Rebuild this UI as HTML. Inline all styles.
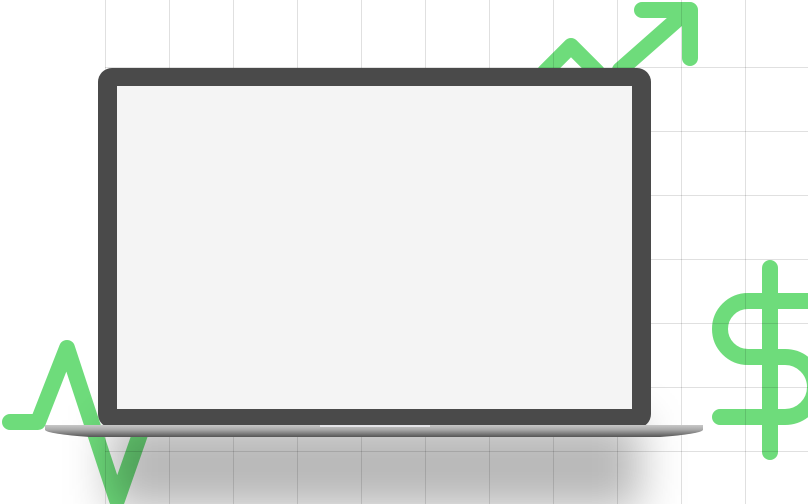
<!DOCTYPE html>
<html><head><meta charset="utf-8"><style>
html,body{margin:0;padding:0;width:808px;height:504px;overflow:hidden;background:#fff}
svg{display:block}
</style></head><body>
<svg width="808" height="504" viewBox="0 0 808 504" xmlns="http://www.w3.org/2000/svg">
<defs>
<filter id="bl" x="-20%" y="-50%" width="140%" height="200%"><feGaussianBlur stdDeviation="22"/></filter>
<linearGradient id="base" x1="0" y1="0" x2="0" y2="1">
<stop offset="0" stop-color="#c8c8c8"/>
<stop offset="0.4" stop-color="#a8a8a8"/>
<stop offset="1" stop-color="#555"/>
</linearGradient>
</defs>
<g stroke="#6edc7b" stroke-width="16" fill="none" stroke-linecap="round" stroke-linejoin="round">
<polyline points="10,422 38,422 67,348 117,500 145,420"/>
<polyline points="545,72 571,46 597,72"/>
<line x1="620" y1="70" x2="688" y2="10"/>
<polyline points="642,10 690,10 690,58"/>
<line x1="770" y1="268" x2="770" y2="452"/>
<path d="M820,301 H748 A28,28 0 0 0 748,357 H785 A30,30 0 0 1 785,417 H720"/>
</g>
<g stroke="#000" stroke-opacity="0.12" stroke-width="1">
<path d="M105.5,0V504M169.5,0V504M233.5,0V504M297.5,0V504M361.5,0V504M425.5,0V504M489.5,0V504M553.5,0V504M617.5,0V504M681.5,0V504M745.5,0V504"/>
<path d="M105,67.5H808M105,131.5H808M105,195.5H808M105,259.5H808M105,323.5H808M105,387.5H808M105,451.5H808"/>
</g>
<rect x="110" y="420" width="530" height="90" fill="#000" fill-opacity="0.28" filter="url(#bl)"/>
<rect x="98" y="68" width="553" height="360" rx="14" fill="#4a4a4a"/>
<rect x="117" y="86" width="515" height="323" fill="#f4f4f4"/>
<path d="M45,425 H703 V430 Q700,434 660,437 H90 Q48,434 45,430 Z" fill="url(#base)"/>
<rect x="320" y="425" width="110" height="2" fill="#e4e4e8"/>
</svg>
</body></html>
